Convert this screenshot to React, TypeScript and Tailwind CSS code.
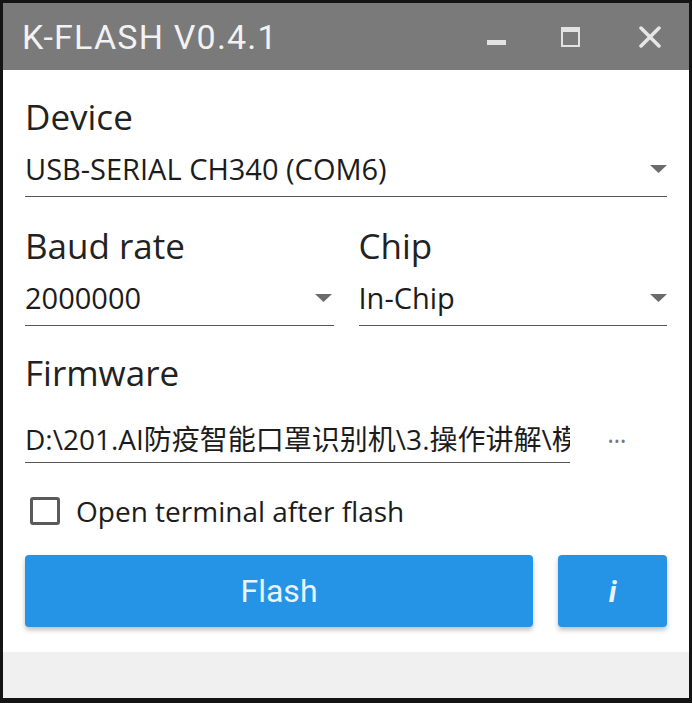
import React, { useState } from 'react';

const FONT = "font-['Open_Sans','Noto_Sans_CJK_SC',sans-serif]";

function Caret() {
  return (
    <svg width="17" height="8" viewBox="0 0 17 8" className="shrink-0">
      <polygon points="0,0 17,0 8.5,8" fill="#6b6b6b" />
    </svg>
  );
}

function Select({ value, className = '' }: { value: string; className?: string }) {
  return (
    <div className={`flex h-[48px] items-center justify-between border-b border-[#555] pb-[8px] ${className}`}>
      <span className="text-[29px] leading-none text-[#1c1c1c]">{value}</span>
      <Caret />
    </div>
  );
}

export default function App() {
  const [openTerminal, setOpenTerminal] = useState(false);

  return (
    <div className={`flex h-[703px] w-[692px] flex-col border-[3px] border-b-[5px] border-[#141414] bg-white ${FONT}`}>
      {/* title bar */}
      <div className="flex h-[67px] shrink-0 items-center bg-[#7a7a7a] pl-[19px] pr-[28px]">
        <h1 className="font-['Roboto',sans-serif] text-[34px] leading-none tracking-[1.2px] text-[#f2f2f2]">K-FLASH V0.4.1</h1>
        <div className="ml-auto flex items-center">
          <div className="mt-[12px] h-[5px] w-[19px] bg-[#e2e2e2]" />
          <div className="ml-[55px] h-[20px] w-[19px] border-2 border-t-[5px] border-[#e2e2e2]" />
          <svg width="22" height="22" viewBox="0 0 22 22" className="ml-[59px]">
            <path d="M2 2 L20 20 M20 2 L2 20" stroke="#e6e6e6" strokeWidth="3.5" strokeLinecap="round" />
          </svg>
        </div>
      </div>

      {/* form */}
      <div className="flex flex-col px-[22px]">
        <label className="mt-[29px] text-[35px] leading-[36px] text-[#222]">Device</label>
        <Select value="USB-SERIAL CH340 (COM6)" className="mt-[14px]" />

        <div className="mt-[31px] flex gap-[25px]">
          <div className="flex flex-1 flex-col">
            <label className="text-[35px] leading-[36px] text-[#222]">Baud rate</label>
            <Select value="2000000" className="mt-[14px] pr-[2px]" />
          </div>
          <div className="flex flex-1 flex-col">
            <label className="text-[35px] leading-[36px] text-[#222]">Chip</label>
            <Select value="In-Chip" className="mt-[14px]" />
          </div>
        </div>

        <label className="mt-[29px] text-[35px] leading-[36px] text-[#222]">Firmware</label>
        <div className="mt-[30px] flex items-center">
          <div className="flex h-[42px] w-[545px] shrink-0 items-center overflow-hidden whitespace-nowrap border-b border-[#555] pb-[6px]">
            <span className="text-[28px] leading-none text-[#1c1c1c]">D:\201.AI防疫智能口罩识别机\3.操作讲解\模型</span>
          </div>
          <span className="ml-[38px] text-[14px] leading-none tracking-[1px] text-[#777]">•••</span>
        </div>

        <label className="mt-[34px] flex cursor-pointer items-center gap-[16px]">
          <span
            onClick={() => setOpenTerminal(!openTerminal)}
            className={`ml-[5px] flex h-[28px] w-[30px] items-center justify-center rounded-[3px] border-[3px] border-[#5a5a5a] ${openTerminal ? 'bg-[#5a5a5a]' : ''}`}
          />
          <span className="text-[28px] leading-none text-[#1c1c1c]">Open terminal after flash</span>
        </label>

        <div className="mt-[30px] flex gap-[25px]">
          <button className="h-[72px] flex-1 rounded-[4px] bg-[#2594e6] font-['Roboto',sans-serif] text-[32px] text-[#e8f3fc] shadow-[0_3px_5px_rgba(0,0,0,0.25)]">
            Flash
          </button>
          <button className="h-[72px] w-[109px] rounded-[4px] bg-[#2594e6] font-['Roboto',sans-serif] text-[30px] font-bold italic text-[#e8f3fc] shadow-[0_3px_5px_rgba(0,0,0,0.25)]">
            i
          </button>
        </div>
      </div>

      <div className="mt-auto h-[46px] shrink-0 bg-[#f0f0f0]" />
    </div>
  );
}
